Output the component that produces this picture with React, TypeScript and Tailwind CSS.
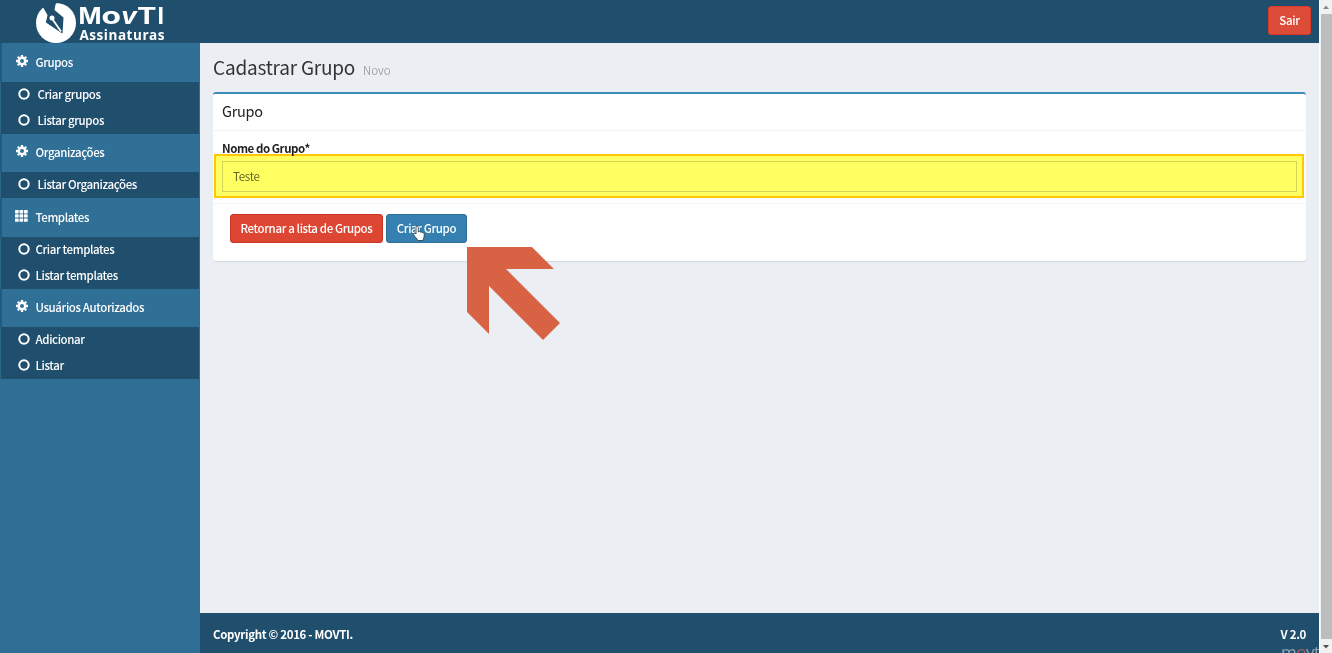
import React from 'react';

interface MenuGroup {
  title: string;
  icon: 'cog' | 'grid';
  indent: string;
  items: string[];
}

const menu: MenuGroup[] = [
  { title: 'Grupos', icon: 'cog', indent: 'pl-[8px]', items: ['Criar grupos', 'Listar grupos'] },
  { title: 'Organizações', icon: 'cog', indent: 'pl-[8px]', items: ['Listar Organizações'] },
  { title: 'Templates', icon: 'grid', indent: 'pl-[6px]', items: ['Criar templates', 'Listar templates'] },
  { title: 'Usuários Autorizados', icon: 'cog', indent: 'pl-[6px]', items: ['Adicionar', 'Listar'] },
];

const Gear: React.FC = () => (
  <svg className="ml-[1px]" width="12" height="12" viewBox="0 0 12 12" fill="none" stroke="white">
    <circle cx="6" cy="6" r="3.2" strokeWidth="2.4" />
    <path d="M6 0v2M6 10v2M0 6h2M10 6h2M1.8 1.8l1.4 1.4M8.8 8.8l1.4 1.4M1.8 10.2l1.4-1.4M8.8 3.2l1.4-1.4" strokeWidth="2.3" />
  </svg>
);

const Ring: React.FC = () => (
  <svg width="12" height="12" viewBox="0 0 12 12" fill="none" stroke="white" strokeWidth="2">
    <circle cx="6" cy="6" r="4.7" />
  </svg>
);

const Grid: React.FC = () => (
  <svg width="13" height="12" viewBox="0 0 13 12" fill="white">
    {[0, 4.5, 9].map((x) =>
      [0, 4.2, 8.4].map((y) => <rect key={`${x}-${y}`} x={x} y={y} width="3.7" height="3.4" rx="0.6" />),
    )}
  </svg>
);

const Logo: React.FC = () => (
  <svg width="134" height="43" viewBox="0 0 134 43" fill="white">
    <circle cx="21" cy="23" r="20" />
    <path d="M7 5.5L13 0H24L20.5 4.5L19.5 10L28.5 17.5L27.5 33.5L11 22.5L12.5 15Z" fill="#204f6e" />
    <path d="M11 22L27.5 33.5L18 24.5L13 17Z" fill="#204f6e" />
    <path d="M17 18.5L26 31.5" stroke="white" strokeWidth="1.8" />
    <circle cx="17" cy="18" r="2.5" />
    <g fontFamily="Inter, sans-serif" fontWeight="700" fontSize="23">
      <text x="43.5" y="24" textLength="23" lengthAdjust="spacingAndGlyphs">M</text>
      <text x="66.5" y="24" textLength="19.5" lengthAdjust="spacingAndGlyphs">o</text>
      <text x="86" y="24" fontStyle="italic" textLength="16" lengthAdjust="spacingAndGlyphs">v</text>
      <text x="102" y="24" textLength="19.5" lengthAdjust="spacingAndGlyphs">T</text>
      <text x="122.5" y="24">I</text>
    </g>
    <text x="44.5" y="39.5" fontFamily="'Open Sans', sans-serif" fontWeight="700" fontSize="13.5" textLength="85" lengthAdjust="spacing">Assinaturas</text>
  </svg>
);

const Sidebar: React.FC = () => (
  <aside className="w-[200px] shrink-0 bg-[#306f95] font-medium tracking-[-0.38px]">
    {menu.map((group) => (
      <div key={group.title}>
        <div className="mr-[1px] flex h-[38.5px] items-center border-l-2 border-[#235b7f] bg-[#306f96] pl-[13px]">
          <span className="flex w-[20.5px] pb-[3px]">{group.icon === 'cog' ? <Gear /> : <Grid />}</span>
          <span className="pb-[1.5px]">{group.title}</span>
        </div>
        <ul className="mr-[1px] border-l border-[#2b6789] bg-[#204f6d]">
          {group.items.map((item) => (
            <li key={item} className="flex h-[26px] items-center pb-[2px] pl-[16.5px]">
              <Ring />
              <span className={group.indent}>{item}</span>
            </li>
          ))}
        </ul>
      </div>
    ))}
  </aside>
);

const App: React.FC = () => (
  <div className="flex h-[653px] w-[1332px] overflow-hidden bg-white font-['Noto_Sans_CJK_SC',sans-serif] text-[11.5px] leading-[18px] tracking-[-0.28px] text-white">
    <div className="flex w-[1319px] flex-col">
      <header className="flex h-[43px] shrink-0 justify-between bg-[#204f6e] pr-2">
        <div className="pl-[35px] tracking-normal"><Logo /></div>
        <button className="mt-[6px] h-[29px] w-[43px] rounded-[3px] border border-[#d73925] bg-[#dd4b39] pb-[2px] font-medium">Sair</button>
      </header>

      <div className="flex min-h-0 flex-1">
        <Sidebar />
        <div className="flex min-w-0 flex-1 flex-col bg-[#ebeef3]">
          <main className="flex-1 pl-[13px] pr-[13px] pt-[11px]">
            <h1 className="flex h-[38px] items-baseline gap-2 text-[19px] leading-[26px] tracking-[-0.22px] text-[#333]">
              Cadastrar Grupo <small className="text-[11.5px] font-light tracking-normal text-[#888]">Novo</small>
            </h1>

            <section className="h-[169px] rounded-[3px] border-t-2 border-[#3c8dbc] bg-white text-[#222] shadow-[0_1px_1px_rgba(0,0,0,0.1)]">
              <h3 className="h-[37px] border-b border-[#f4f4f4] pl-[9px] pt-[7px] text-[14.5px] leading-[20px]">Grupo</h3>
              <div className="relative h-[73px] border-b border-[#f4f4f4] px-[9px] pt-[8px]">
                <label className="block h-[22px] font-bold tracking-[-0.45px]">Nome do Grupo*</label>
                <div className="flex h-[31px] items-center border border-[#d2d6da] pb-[1px] pl-[10px] text-[#666]">Teste</div>
                <div className="absolute left-[1px] right-[2px] top-[23px] h-[44px] border-2 border-[#ffc800] bg-[#ffff62] mix-blend-multiply" />
              </div>
              <div className="relative flex gap-[3px] pl-[17px] pt-[10px] font-medium tracking-[-0.38px] text-white">
                <button className="h-[29px] w-[153px] whitespace-nowrap rounded-[3px] border border-[#c93522] bg-[#dd4632] pb-[2px]">Retornar a lista de Grupos</button>
                <button className="h-[29px] w-[81px] rounded-[3px] border border-[#2c6f98] bg-[#3580b0] pb-[2px]">Criar Grupo</button>
                <svg className="absolute left-[199px] top-[21px]" width="14" height="17" viewBox="0 0 14 17">
                  <path d="M4 9V2.5C4 .6 6.3.6 6.3 2.5V7c1-.9 2-.6 2.3.3 1-.6 1.8-.2 2 .6 1-.3 1.7.3 1.7 1.3 0 3-.8 3.8-1.3 6.3H5.8C5 13.5 2.8 11.8 1.7 9.7 1.1 8.5 2.8 7.5 4 9Z" fill="white" stroke="#26323c" strokeWidth=".8" />
                </svg>
                <svg className="absolute left-[254px] top-[43px]" width="94" height="94" viewBox="0 0 94 94">
                  <path d="M0 0H65L87 22H39L93 76L76 93L22 39V87L0 65Z" fill="#d86344" />
                </svg>
              </div>
            </section>
          </main>

          <footer className="relative flex h-[40px] shrink-0 items-center justify-between overflow-hidden bg-[#204f6e] pl-[13px] pr-[13px] pt-[2px] font-bold tracking-[-0.33px]">
            <span>Copyright © 2016 - MOVTI.</span>
            <span>V 2.0</span>
            <span className="absolute left-[1081px] top-[29px] whitespace-nowrap font-['Open_Sans',sans-serif] text-[17px] font-normal leading-[20px] tracking-[-0.5px] text-[#93a5b3]">
              m<span className="text-[#b85a5a]">o</span>vt
            </span>
          </footer>
        </div>
      </div>
    </div>

    <div className="ml-[1px] flex w-[12px] flex-col items-center justify-between bg-[#f1f1f1]">
      <svg width="12" height="14" viewBox="0 0 12 14"><path d="M3 9L6 5.5L9 9Z" fill="#8a8a8a" /></svg>
      <div className="ml-[1px] w-[11px] flex-1 bg-[#bdbdbd]" />
      <svg width="12" height="14" viewBox="0 0 12 14"><path d="M3 6L6 9.5L9 6Z" fill="#505050" /></svg>
    </div>
  </div>
);

export default App;
